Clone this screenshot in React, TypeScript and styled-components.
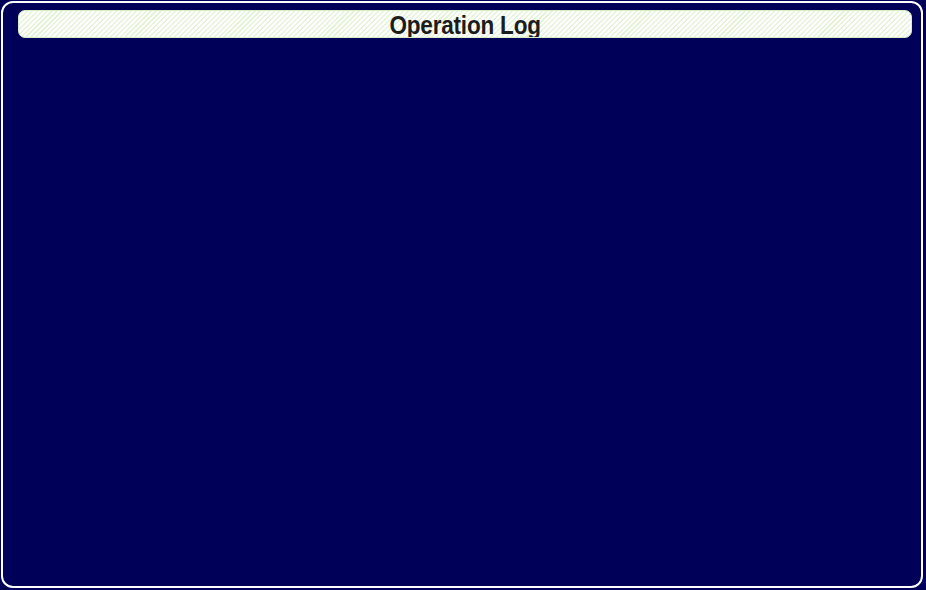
import styled, { createGlobalStyle } from "styled-components";

const GlobalStyle = createGlobalStyle`
  html, body {
    margin: 0;
    padding: 0;
    background: #000058;
  }
`;

const Frame = styled.div`
  box-sizing: border-box;
  width: 922px;
  height: 587px;
  margin: 1px 0 0 1px;
  padding: 7px 9px 0 15px;
  border: 2px solid #ffffff;
  border-radius: 12px;
  background: #000058;
  display: flex;
  flex-direction: column;
`;

const TitleBar = styled.div`
  box-sizing: border-box;
  height: 28px;
  border-radius: 7px;
  border: 1px solid #d8ecc8;
  background: repeating-linear-gradient(
    -45deg,
    #ffffff 0px,
    #ffffff 2px,
    #e6f4da 2px,
    #e6f4da 3.5px
  );
  display: flex;
  align-items: center;
  justify-content: center;
  overflow: hidden;
`;

const Title = styled.h1`
  margin: 1px 0 0 0;
  font-family: "Liberation Sans", Arial, sans-serif;
  font-weight: bold;
  font-size: 25px;
  line-height: 26px;
  letter-spacing: -0.2px;
  color: #1c1c1c;
  transform: scaleX(0.9);
`;

const LogArea = styled.div`
  flex: 1;
`;

export default function App() {
  return (
    <>
      <GlobalStyle />
      <Frame>
        <TitleBar>
          <Title>Operation Log</Title>
        </TitleBar>
        <LogArea />
      </Frame>
    </>
  );
}
